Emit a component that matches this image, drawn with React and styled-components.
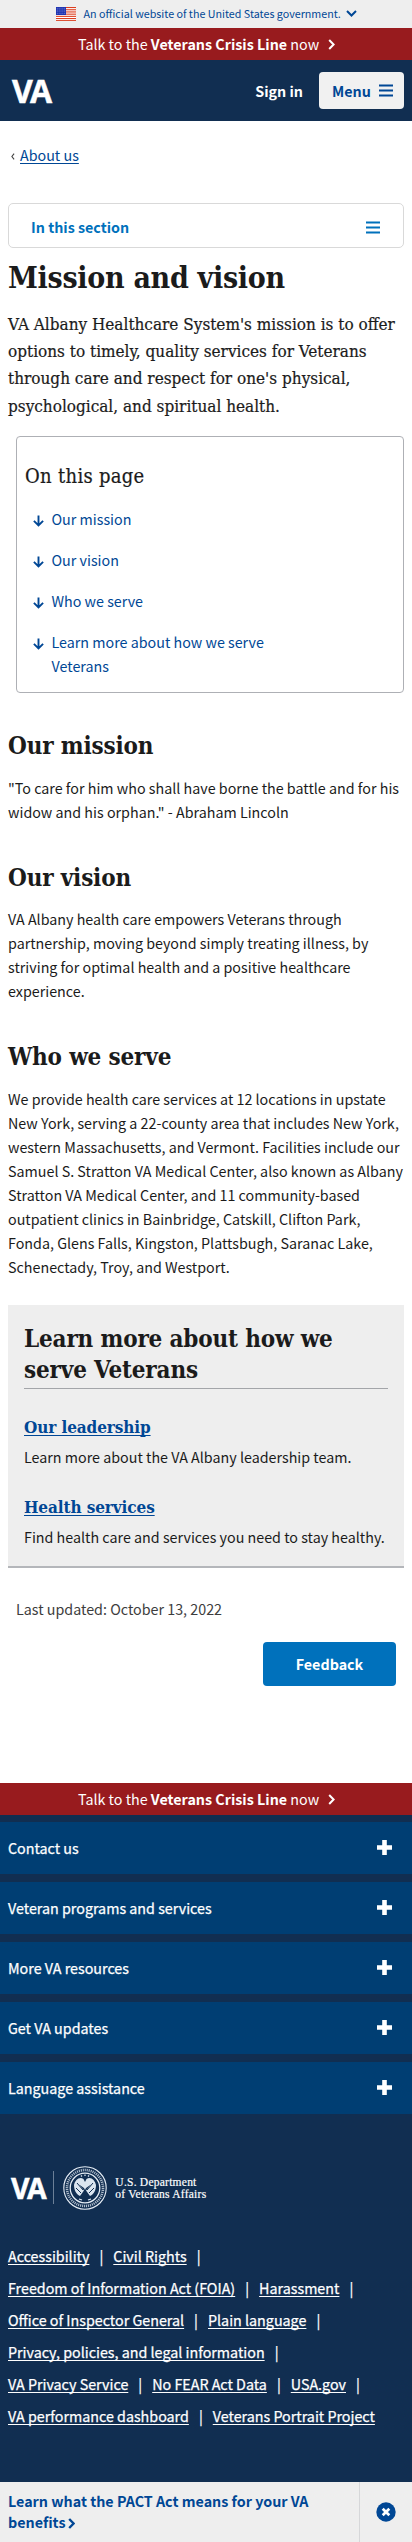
import React from 'react';
import styled, { createGlobalStyle, css } from 'styled-components';

const sans = '"Noto Sans CJK SC", "Noto Sans", sans-serif';
const slab = '"DejaVu Serif Condensed", "DejaVu Serif", serif';

const color = {
  ink: '#1b1b1b',
  link: '#004795',
  navy: '#112e51',
  blue: '#003e73',
  action: '#0071bc',
  red: '#981b1e',
  pale: '#eeeeee',
};

const GlobalStyle = createGlobalStyle`
  * { box-sizing: border-box; }
  body { margin: 0; background: #fff; }
  h1, h2, h3, p, ul { margin: 0; padding: 0; }
  ul { list-style: none; }
`;

const Page = styled.div`
  width: 412px;
  font-family: ${sans};
  font-size: 14.3px;
  line-height: 24px;
  color: ${color.ink};
`;

const GovBanner = styled.div`
  display: flex;
  align-items: center;
  height: 28px;
  padding-left: 56px;
  background: ${color.pale};
  color: ${color.link};
  font-size: 10.73px;
  white-space: nowrap;
  svg:first-child { margin-right: 7.5px; }
  svg:last-child { margin: 0 0 2px 5px; }
`;

const CrisisLine = styled.a`
  display: flex;
  align-items: center;
  height: 32px;
  padding-left: 78px;
  background: ${color.red};
  color: #fff;
  white-space: pre;
  svg { margin: 1px 0 0 9px; }
`;

const Header = styled.header`
  display: flex;
  align-items: center;
  height: 61px;
  padding: 0 8px 0 12px;
  background: ${color.navy};
  color: #fff;
  font-weight: 700;
`;

const Wordmark = styled.span`
  font-family: "Open Sans", "Noto Sans", sans-serif;
  font-weight: 700;
  font-size: ${(p) => p.$size}px;
  letter-spacing: ${(p) => p.$size * -0.085}px;
  line-height: 1;
  -webkit-text-stroke: 0.5px currentColor;
`;

const SignIn = styled.span`
  margin: 0 16px 0 auto;
`;

const MenuButton = styled.span`
  display: flex;
  align-items: center;
  gap: 8px;
  width: 85px;
  height: 37px;
  padding-left: 13px;
  border-radius: 4px;
  background: #f1f1f1;
  color: ${color.link};
`;

const Breadcrumb = styled.nav`
  display: flex;
  gap: 5px;
  padding: 22px 8px 0 11px;
  height: 82px;
  align-items: flex-start;
  svg { margin-top: 10px; }
`;

const Link = styled.a`
  color: ${(p) => p.$tone || color.link};
  text-decoration: underline;
  text-underline-offset: 2px;
  text-decoration-thickness: 1px;
  text-decoration-skip-ink: none;
`;

const SectionMenu = styled.div`
  display: flex;
  align-items: center;
  justify-content: space-between;
  height: 45px;
  margin: 0 8px;
  padding: 3px 23px 0 22px;
  border: 1px solid #d9d9d9;
  border-radius: 5px;
  color: ${color.action};
  font-weight: 700;
`;

const Main = styled.main`
  padding: 0 8px;
`;

const Title = styled.h1`
  margin-top: 11px;
  font: 700 30px/38px ${slab};
  letter-spacing: -0.3px;
`;

const Intro = styled.p`
  margin-top: 14px;
  font: 400 17px/27.2px ${slab};
  -webkit-text-stroke: 0.2px currentColor;
`;

const PageIndex = styled.div`
  height: 257px;
  margin: 16px 0 0 8px;
  padding: 26px 9px 0 8px;
  border: 1px solid #aeb0b5;
  border-radius: 4px;
`;

const IndexTitle = styled.h2`
  font: 400 20px/26px ${slab};
  letter-spacing: 0.3px;
  -webkit-text-stroke: 0.2px currentColor;
`;

const IndexList = styled.ul`
  display: flex;
  flex-direction: column;
  gap: 17px;
  margin: 18px 0 0 8px;
`;

const IndexItem = styled.li`
  display: flex;
  align-items: flex-start;
  gap: 7.5px;
  width: 245px;
  color: ${color.link};
  svg { flex: none; margin-top: 8px; }
`;

const Heading = styled.h2`
  margin-top: ${(p) => p.$top}px;
  font: 700 24px/31px ${slab};
  letter-spacing: -0.17px;
`;

const Copy = styled.p`
  margin-top: ${(p) => p.$top ?? 14}px;
  white-space: ${(p) => (p.$single ? 'nowrap' : 'normal')};
`;

const RelatedPanel = styled.section`
  height: 263px;
  margin-top: 26px;
  padding: 18px 16px 0;
  border-bottom: 2px solid #b4b6ba;
  background: ${color.pale};
`;

const RelatedHeading = styled(Heading)`
  padding-bottom: 3px;
  border-bottom: 1px solid #a3a5a9;
`;

const RelatedLink = styled.h3`
  margin-top: ${(p) => p.$top}px;
  font: 700 17px/24px ${slab};
  letter-spacing: -0.1px;
`;

const Updated = styled.p`
  margin: 29px 0 0 8px;
  color: #3d3d3d;
`;

const FeedbackButton = styled.span`
  display: flex;
  align-items: center;
  justify-content: center;
  width: 133px;
  height: 44px;
  margin: 21px 8px 97px auto;
  border-radius: 4px;
  background: ${color.action};
  color: #fff;
  font-weight: 700;
`;

const medium = css`
  -webkit-text-stroke: 0.25px currentColor;
`;

const Footer = styled.footer`
  height: 667px;
  padding-top: 7px;
  background: ${color.navy};
  color: #fff;
`;

const Accordion = styled.div`
  display: flex;
  flex-direction: column;
  gap: 8px;
`;

const AccordionRow = styled.div`
  display: flex;
  align-items: center;
  justify-content: space-between;
  height: 52px;
  padding: 0 20px 0 8px;
  background: ${color.blue};
  ${medium}
`;

const Brand = styled.div`
  display: flex;
  align-items: center;
  height: 44px;
  margin: 52px 0 0 11px;
`;

const Divider = styled.span`
  width: 1px;
  height: 33px;
  margin: 0 9px 0 9px;
  background: #6b7f97;
`;

const Department = styled.span`
  margin-left: 8px;
  font: 400 11.5px/12px "Liberation Serif", serif;
  letter-spacing: 0.24px;
  white-space: nowrap;
  -webkit-text-stroke: 0.2px currentColor;
`;

const FooterLinks = styled.ul`
  display: flex;
  flex-wrap: wrap;
  margin: 30px 8px 0;
  line-height: 32px;
  ${medium}
`;

const FooterItem = styled.li`
  white-space: nowrap;
  &:not(:last-child)::after {
    content: '|';
    margin: 0 10px;
  }
`;

const Promo = styled.div`
  display: flex;
  height: 60px;
  background: ${color.pale};
  color: ${color.link};
  font-weight: 700;
  line-height: 21.6px;
`;

const PromoText = styled.p`
  flex: 1;
  padding: 8px 0 0 8px;
  svg { margin: 0 0 -1px -1px; }
`;

const PromoClose = styled.span`
  display: flex;
  align-items: center;
  justify-content: center;
  width: 53px;
  border-left: 1px solid #d6d7d9;
`;

const Flag = () => (
  <svg width="20" height="14" viewBox="0 0 20 14">
    <rect width="20" height="14" fill="#fff" />
    {[0, 2.2, 4.4, 6.6, 8.8, 11, 13.1].map((y) => (
      <rect key={y} y={y} width="20" height="1.1" fill="#db3e1f" />
    ))}
    <rect width="10" height="8" fill="#1e33b1" />
    {[1.2, 3, 4.8, 6.6].map((y) =>
      [1.2, 3.1, 5, 6.9, 8.8].map((x) => <circle key={`${x}-${y}`} cx={x} cy={y} r=".4" fill="#c3cdf0" />)
    )}
  </svg>
);

const Chevron = ({ w = 7, h = 11, stroke = 2 }) => (
  <svg width={w} height={h} viewBox="0 0 7 11" fill="none" stroke="currentColor" strokeWidth={stroke}>
    <path d="M1.2 1 5.6 5.5 1.2 10" />
  </svg>
);

const BackChevron = () => (
  <svg width="4" height="7" viewBox="0 0 4 7" fill="none" stroke="#444" strokeWidth="1.1">
    <path d="M3.100 .7 .9 3.500l2.200 2.800" />
  </svg>
);

const Bars = () => (
  <svg width="14" height="13" viewBox="0 0 14 13" fill="currentColor">
    <path d="M0 .5h14v2H0zM0 5.5h14v2H0zM0 10.5h14v2H0z" />
  </svg>
);

const ArrowDown = () => (
  <svg width="11" height="12" viewBox="0 0 11 12" fill="none" stroke="currentColor" strokeWidth="1.9">
    <path d="M5.5 .5v9.6M.9 5.8l4.6 4.6 4.6-4.6" />
  </svg>
);

const Plus = () => (
  <svg width="15" height="15" viewBox="0 0 15 15" fill="#fff">
    <path d="M5.2 0h4.6v5.2H15v4.6H9.8V15H5.2V9.8H0V5.2h5.2z" />
  </svg>
);

const Seal = () => (
  <svg width="44" height="44" viewBox="0 0 44 44" fill="none" stroke="#e6edf5">
    <circle cx="22" cy="22" r="21.2" strokeWidth="1.1" />
    <circle cx="22" cy="22" r="18" strokeWidth="2.6" strokeDasharray="1.1 .9" opacity=".75" />
    <circle cx="22" cy="22" r="14.8" strokeWidth="1.3" />
    <path
      d="M20.5 13c-4-3-8.500 1-9.500 6 0 5 2 9 6 11l4-5.500-5-6 5 3.500 1 2 1-2 5-3.500-5 6 4 5.500c4-2 6-6 6-11-1-5-5.500-9-9.500-6l-1.500 3z"
      fill="#dbe5ef"
      stroke="none"
    />
    <path d="m14 17 6 7M30 17l-6 7M13 22l5 5M31 22l-5 5M22 26v8M17 33l5-4 5 4" stroke="#112e51" strokeWidth="1" />
    <path d="M18 9.500l1 1M22 8.500v1.500M26 9.500l-1 1M16 33l3 1M28 33l-3 1" strokeWidth="1.200" />
  </svg>
);

const CloseCircle = () => (
  <svg width="20" height="20" viewBox="0 0 20 20">
    <circle cx="10" cy="10" r="9.700" fill={color.link} />
    <path d="m6.700 6.700 6.600 6.600m0-6.600-6.600 6.600" stroke="#fff" strokeWidth="2.700" />
  </svg>
);

const Crisis = () => (
  <CrisisLine>
    <span>Talk to the <b>Veterans Crisis Line</b> now</span>
    <Chevron />
  </CrisisLine>
);

const anchors = ['Our mission', 'Our vision', 'Who we serve', 'Learn more about how we serve Veterans'];
const accordions = ['Contact us', 'Veteran programs and services', 'More VA resources', 'Get VA updates', 'Language assistance'];
const footerLinks = [
  'Accessibility',
  'Civil Rights',
  'Freedom of Information Act (FOIA)',
  'Harassment',
  'Office of Inspector General',
  'Plain language',
  'Privacy, policies, and legal information',
  'VA Privacy Service',
  'No FEAR Act Data',
  'USA.gov',
  'VA performance dashboard',
  'Veterans Portrait Project',
];

export default function App() {
  return (
    <Page>
      <GlobalStyle />
      <GovBanner>
        <Flag />
        <span>An official website of the United States government.</span>
        <svg width="11" height="7" viewBox="0 0 11 7" fill="none" stroke="currentColor" strokeWidth="2">
          <path d="M1 1l4.500 4.500L10 1" />
        </svg>
      </GovBanner>
      <Crisis />
      <Header>
        <Wordmark $size={32}>VA</Wordmark>
        <SignIn>Sign in</SignIn>
        <MenuButton>
          Menu
          <Bars />
        </MenuButton>
      </Header>
      <Breadcrumb>
        <BackChevron />
        <Link>About us</Link>
      </Breadcrumb>
      <SectionMenu>
        In this section
        <Bars />
      </SectionMenu>
      <Main>
        <Title>Mission and vision</Title>
        <Intro>
          VA Albany Healthcare System's mission is to offer options to timely, quality services for Veterans
          through care and respect for one's physical, psychological, and spiritual health.
        </Intro>
        <PageIndex>
          <IndexTitle>On this page</IndexTitle>
          <IndexList>
            {anchors.map((label) => (
              <IndexItem key={label}>
                <ArrowDown />
                <span>{label}</span>
              </IndexItem>
            ))}
          </IndexList>
        </PageIndex>
        <Heading $top={37}>Our mission</Heading>
        <Copy $top={15}>
          "To care for him who shall have borne the battle and for his widow and his orphan." - Abraham Lincoln
        </Copy>
        <Heading $top={38}>Our vision</Heading>
        <Copy>
          VA Albany health care empowers Veterans through partnership, moving beyond simply treating illness, by
          striving for optimal health and a positive healthcare experience.
        </Copy>
        <Heading $top={38}>Who we serve</Heading>
        <Copy $top={15}>
          We provide health care services at 12 locations in upstate New York, serving a 22-county area that
          includes New York, western Massachusetts, and Vermont. Facilities include our Samuel S. Stratton VA
          Medical Center, also known as Albany Stratton VA Medical Center, and 11 community-based outpatient
          clinics in Bainbridge, Catskill, Clifton Park, Fonda, Glens Falls, Kingston, Plattsbugh, Saranac Lake,
          Schenectady, Troy, and Westport.
        </Copy>
        <RelatedPanel>
          <RelatedHeading $top={0}>Learn more about how we serve Veterans</RelatedHeading>
          <RelatedLink $top={26}><Link>Our leadership</Link></RelatedLink>
          <Copy $top={6} $single>Learn more about the VA Albany leadership team.</Copy>
          <RelatedLink $top={26}><Link>Health services</Link></RelatedLink>
          <Copy $top={6} $single>Find health care and services you need to stay healthy.</Copy>
        </RelatedPanel>
        <Updated>Last updated: October 13, 2022</Updated>
        <FeedbackButton>Feedback</FeedbackButton>
      </Main>
      <Crisis />
      <Footer>
        <Accordion>
          {accordions.map((label) => (
            <AccordionRow key={label}>
              {label}
              <Plus />
            </AccordionRow>
          ))}
        </Accordion>
        <Brand>
          <Wordmark $size={28.5}>VA</Wordmark>
          <Divider />
          <Seal />
          <Department>
            U.S. Department
            <br />
            of Veterans Affairs
          </Department>
        </Brand>
        <FooterLinks>
          {footerLinks.map((label) => (
            <FooterItem key={label}>
              <Link $tone="#fff">{label}</Link>
            </FooterItem>
          ))}
        </FooterLinks>
      </Footer>
      <Promo>
        <PromoText>
          Learn what the PACT Act means for your VA benefits <Chevron stroke={2.4} />
        </PromoText>
        <PromoClose>
          <CloseCircle />
        </PromoClose>
      </Promo>
    </Page>
  );
}
